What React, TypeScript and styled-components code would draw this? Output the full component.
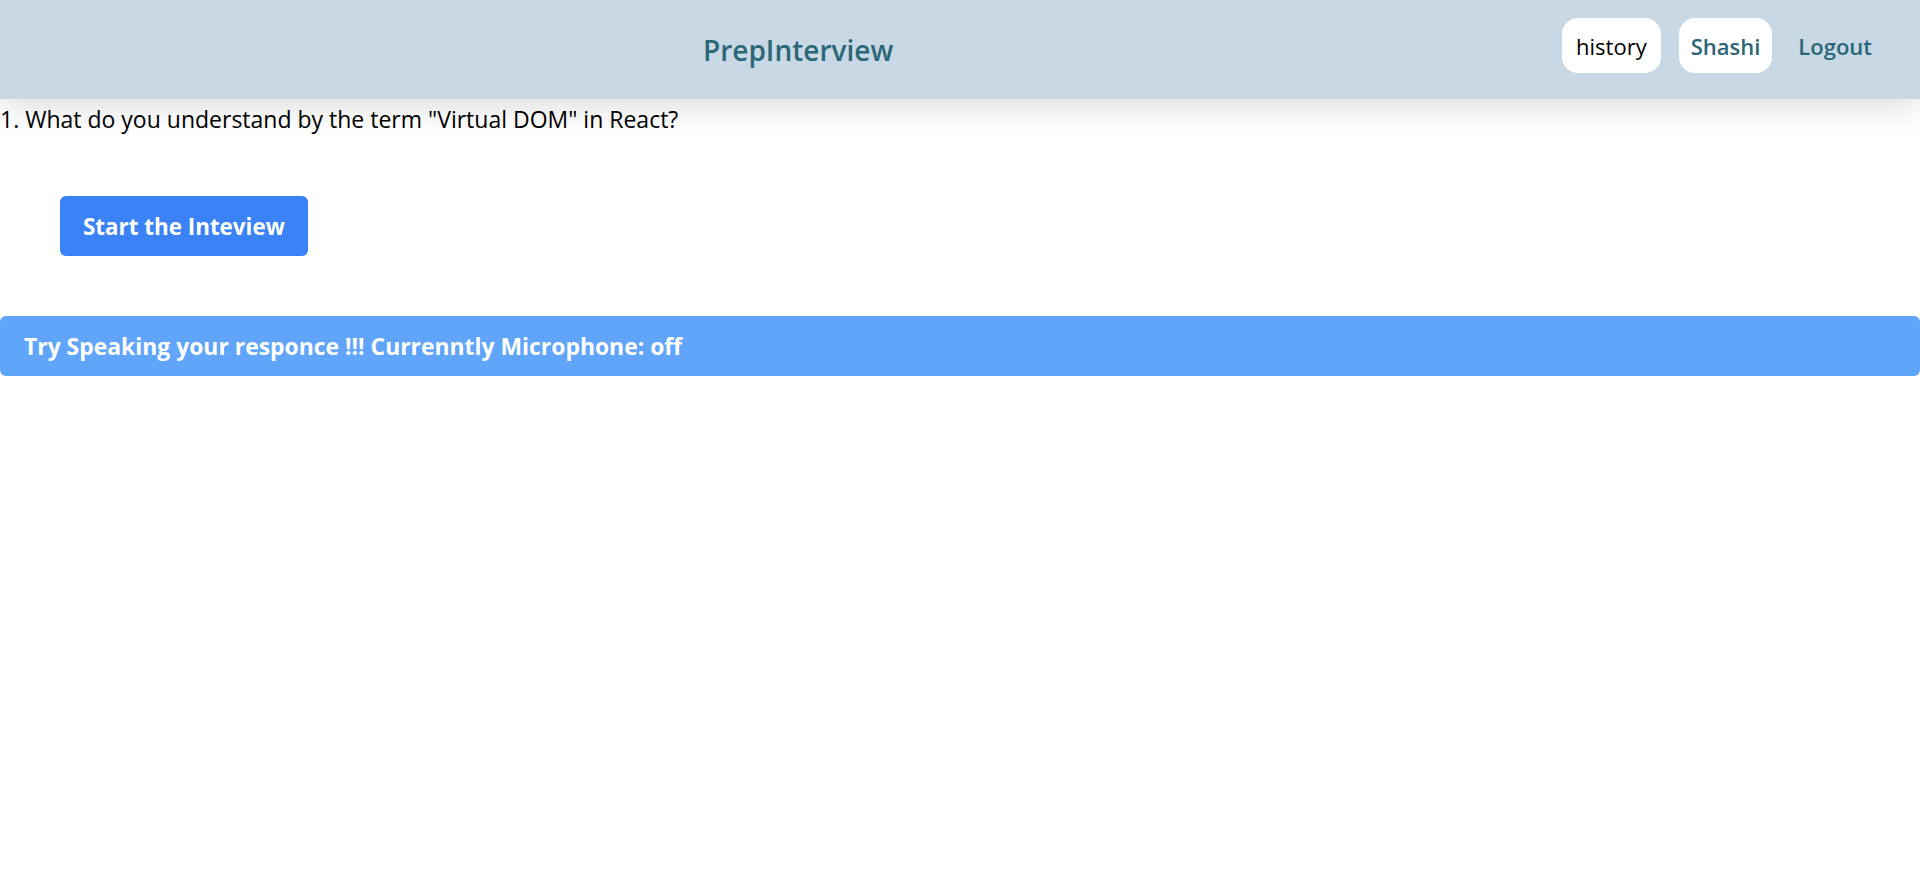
import React from "react";
import styled, { createGlobalStyle } from "styled-components";

const GlobalStyle = createGlobalStyle`
  html, body {
    margin: 0;
    padding: 0;
    background: #ffffff;
    font-family: "Open Sans", "Noto Sans", Arial, sans-serif;
    color: #000000;
  }
  * { box-sizing: border-box; }
`;

const Header = styled.header`
  position: relative;
  z-index: 1;
  height: 99px;
  background: #c8d8e4;
  display: flex;
  align-items: center;
  padding: 0 40px 0 703px;
  box-shadow: 0 8px 32px rgba(0, 0, 0, 0.14);
`;

const Title = styled.h1`
  margin: 0;
  font-size: 28px;
  font-weight: 600;
  color: #2b6777;
  flex: 1;
`;

const Nav = styled.nav`
  display: flex;
  align-items: center;
  gap: 18px;
  margin-top: -8px;
`;

const Pill = styled.button<{ $accent?: boolean }>`
  height: 55px;
  padding: 0 ${(p) => (p.$accent ? "12px" : "14px")};
  border: none;
  border-radius: 16px;
  background: #ffffff;
  font-family: inherit;
  font-size: 22px;
  font-weight: ${(p) => (p.$accent ? 600 : 400)};
  color: ${(p) => (p.$accent ? "#2b6777" : "#000000")};
  cursor: pointer;
`;

const LinkButton = styled.button`
  height: 55px;
  padding: 0 8px;
  border: none;
  background: transparent;
  font-family: inherit;
  font-size: 22px;
  font-weight: 600;
  color: #2b6777;
  cursor: pointer;
`;

const Question = styled.p`
  margin: 0;
  font-size: 23px;
  line-height: 31px;
  padding-top: 5px;
`;

const Actions = styled.div`
  padding: 61px 0 0 60px;
`;

const StartButton = styled.button`
  height: 60px;
  padding: 0 23px;
  border: none;
  border-radius: 6px;
  background: #3b82f6;
  color: #ffffff;
  font-family: inherit;
  font-size: 22.4px;
  font-weight: 700;
  cursor: pointer;
`;

const Banner = styled.div`
  margin-top: 60px;
  height: 60px;
  display: flex;
  align-items: center;
  padding-left: 24px;
  border-radius: 6px;
  background: #60a5fa;
  color: #ffffff;
  font-size: 22.9px;
  font-weight: 700;
`;

export default function App() {
  return (
    <>
      <GlobalStyle />
      <Header>
        <Title>PrepInterview</Title>
        <Nav>
          <Pill>history</Pill>
          <Pill $accent>Shashi</Pill>
          <LinkButton>Logout</LinkButton>
        </Nav>
      </Header>
      <Question>1. What do you understand by the term "Virtual DOM" in React?</Question>
      <Actions>
        <StartButton>Start the Inteview</StartButton>
      </Actions>
      <Banner>Try Speaking your responce !!! Currenntly Microphone: off</Banner>
    </>
  );
}
